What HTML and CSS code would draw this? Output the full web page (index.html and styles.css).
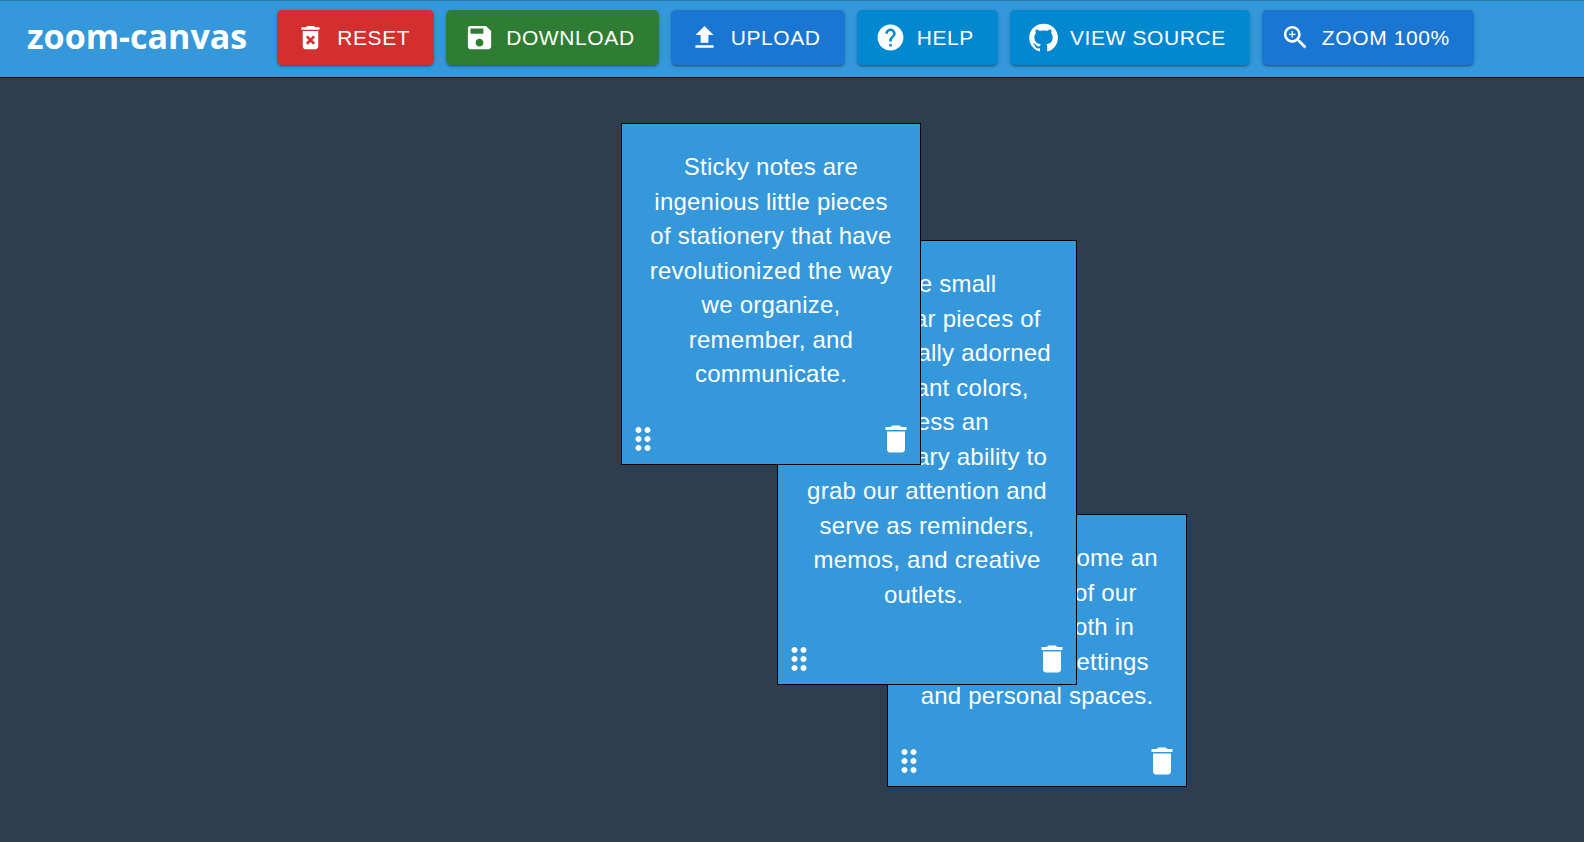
FILE: index.html
```html
<!DOCTYPE html>
<html lang="en">
<head>
<meta charset="utf-8">
<title>zoom-canvas</title>
<link rel="stylesheet" href="styles.css">
</head>
<body>
<header class="toolbar">
  <h1 class="brand">zoom-canvas</h1>
  <button class="btn btn-error" type="button">
    <svg class="btn-icon" viewBox="0 0 24 24" aria-hidden="true"><path d="M6 19c0 1.1.9 2 2 2h8c1.1 0 2-.9 2-2V7H6v12zm2.46-7.12 1.41-1.41L12 12.59l2.12-2.12 1.41 1.41L13.41 14l2.12 2.12-1.41 1.41L12 15.41l-2.12 2.12-1.41-1.41L10.59 14l-2.13-2.12zM15.5 4l-1-1h-5l-1 1H5v2h14V4z"/></svg>
    Reset
  </button>
  <button class="btn btn-success" type="button">
    <svg class="btn-icon" viewBox="0 0 24 24" aria-hidden="true"><path d="M17 3H5c-1.11 0-2 .9-2 2v14c0 1.1.89 2 2 2h14c1.1 0 2-.9 2-2V7l-4-4zm-5 16c-1.66 0-3-1.34-3-3s1.34-3 3-3 3 1.34 3 3-1.34 3-3 3zm3-10H5V5h10v4z"/></svg>
    Download
  </button>
  <button class="btn btn-primary" type="button">
    <svg class="btn-icon" viewBox="0 0 24 24" aria-hidden="true"><path d="M5 20h14v-2H5v2zm0-10h4v6h6v-6h4l-7-7-7 7z"/></svg>
    Upload
  </button>
  <button class="btn btn-info" type="button">
    <svg class="btn-icon" viewBox="0 0 24 24" aria-hidden="true"><path d="M12 2C6.48 2 2 6.48 2 12s4.48 10 10 10 10-4.48 10-10S17.52 2 12 2zm1 17h-2v-2h2v2zm2.07-7.75-.9.92C13.45 12.9 13 13.5 13 15h-2v-.5c0-1.1.45-2.1 1.17-2.83l1.24-1.26c.37-.36.59-.86.59-1.41 0-1.1-.9-2-2-2s-2 .9-2 2H8c0-2.21 1.79-4 4-4s4 1.79 4 4c0 .88-.36 1.68-.93 2.25z"/></svg>
    Help
  </button>
  <a class="btn btn-info" href="#source">
    <svg class="btn-icon" viewBox="0 0 24 24" aria-hidden="true"><path d="M12 1.27a11 11 0 00-3.48 21.46c.55.09.73-.28.73-.55v-1.84c-3.03.64-3.67-1.46-3.67-1.46-.55-1.29-1.28-1.65-1.28-1.65-.92-.65.1-.65.1-.65 1.1 0 1.73 1.1 1.73 1.1.92 1.65 2.57 1.2 3.21.92a2 2 0 01.64-1.47c-2.47-.27-5.04-1.19-5.04-5.5 0-1.1.46-2.1 1.2-2.84a3.76 3.76 0 010-2.93s.91-.28 3.11 1.1c1.8-.49 3.7-.49 5.5 0 2.1-1.38 3.02-1.1 3.02-1.1a3.76 3.76 0 01.1 2.93c.83.74 1.2 1.74 1.2 2.94 0 4.21-2.57 5.13-5.04 5.4.45.37.82.92.82 2.02v3.03c0 .27.1.64.73.55A11 11 0 0012 1.27"/></svg>
    View Source
  </a>
  <button class="btn btn-primary" type="button">
    <svg class="btn-icon" viewBox="0 0 24 24" aria-hidden="true"><path d="M15.5 14h-.79l-.28-.27C15.41 12.59 16 11.11 16 9.5 16 5.91 13.09 3 9.5 3S3 5.91 3 9.5 5.91 16 9.5 16c1.61 0 3.09-.59 4.23-1.57l.27.28v.79l5 4.99L20.49 19l-4.99-5zm-6 0C7.01 14 5 11.99 5 9.5S7.01 5 9.5 5 14 7.01 14 9.5 11.99 14 9.5 14zm2.5-4h-2v2H9v-2H7V9h2V7h1v2h2v1z"/></svg>
    Zoom 100%
  </button>
</header>

<main class="canvas">
  <article class="note note-third">
    <textarea class="note-text" rows="5" aria-label="Note 3" spellcheck="false">They have become an integral part of our daily lives, both in professional settings and personal spaces.</textarea>
    <div class="note-actions">
      <button class="icon-btn" type="button" aria-label="Move note"><svg class="note-icon" viewBox="0 0 24 24" aria-hidden="true"><path d="M11 18c0 1.1-.9 2-2 2s-2-.9-2-2 .9-2 2-2 2 .9 2 2zm-2-8c-1.1 0-2 .9-2 2s.9 2 2 2 2-.9 2-2-.9-2-2-2zm0-6c-1.1 0-2 .9-2 2s.9 2 2 2 2-.9 2-2-.9-2-2-2zm6 4c1.1 0 2-.9 2-2s-.9-2-2-2-2 .9-2 2 .9 2 2 2zm0 2c-1.1 0-2 .9-2 2s.9 2 2 2 2-.9 2-2-.9-2-2-2zm0 6c-1.1 0-2 .9-2 2s.9 2 2 2 2-.9 2-2-.9-2-2-2z"/></svg></button>
      <button class="icon-btn" type="button" aria-label="Delete note"><svg class="note-icon" viewBox="0 0 24 24" aria-hidden="true"><path d="M6 19c0 1.1.9 2 2 2h8c1.1 0 2-.9 2-2V7H6v12zM19 4h-3.5l-1-1h-5l-1 1H5v2h14V4z"/></svg></button>
    </div>
  </article>

  <article class="note note-second">
    <textarea class="note-text" rows="10" aria-label="Note 2" spellcheck="false"> These small rectangular pieces of paper, usually adorned with vibrant colors, possess an extraordinary ability to grab our attention and serve as reminders, memos, and creative outlets.&nbsp;</textarea>
    <div class="note-actions">
      <button class="icon-btn" type="button" aria-label="Move note"><svg class="note-icon" viewBox="0 0 24 24" aria-hidden="true"><path d="M11 18c0 1.1-.9 2-2 2s-2-.9-2-2 .9-2 2-2 2 .9 2 2zm-2-8c-1.1 0-2 .9-2 2s.9 2 2 2 2-.9 2-2-.9-2-2-2zm0-6c-1.1 0-2 .9-2 2s.9 2 2 2 2-.9 2-2-.9-2-2-2zm6 4c1.1 0 2-.9 2-2s-.9-2-2-2-2 .9-2 2 .9 2 2 2zm0 2c-1.1 0-2 .9-2 2s.9 2 2 2 2-.9 2-2-.9-2-2-2zm0 6c-1.1 0-2 .9-2 2s.9 2 2 2 2-.9 2-2-.9-2-2-2z"/></svg></button>
      <button class="icon-btn" type="button" aria-label="Delete note"><svg class="note-icon" viewBox="0 0 24 24" aria-hidden="true"><path d="M6 19c0 1.1.9 2 2 2h8c1.1 0 2-.9 2-2V7H6v12zM19 4h-3.5l-1-1h-5l-1 1H5v2h14V4z"/></svg></button>
    </div>
  </article>

  <article class="note note-first">
    <textarea class="note-text" rows="7" aria-label="Note 1" spellcheck="false">Sticky notes are ingenious little pieces of stationery that have revolutionized the way we organize, remember, and communicate.</textarea>
    <div class="note-actions">
      <button class="icon-btn" type="button" aria-label="Move note"><svg class="note-icon" viewBox="0 0 24 24" aria-hidden="true"><path d="M11 18c0 1.1-.9 2-2 2s-2-.9-2-2 .9-2 2-2 2 .9 2 2zm-2-8c-1.1 0-2 .9-2 2s.9 2 2 2 2-.9 2-2-.9-2-2-2zm0-6c-1.1 0-2 .9-2 2s.9 2 2 2 2-.9 2-2-.9-2-2-2zm6 4c1.1 0 2-.9 2-2s-.9-2-2-2-2 .9-2 2 .9 2 2 2zm0 2c-1.1 0-2 .9-2 2s.9 2 2 2 2-.9 2-2-.9-2-2-2zm0 6c-1.1 0-2 .9-2 2s.9 2 2 2 2-.9 2-2-.9-2-2-2z"/></svg></button>
      <button class="icon-btn" type="button" aria-label="Delete note"><svg class="note-icon" viewBox="0 0 24 24" aria-hidden="true"><path d="M6 19c0 1.1.9 2 2 2h8c1.1 0 2-.9 2-2V7H6v12zM19 4h-3.5l-1-1h-5l-1 1H5v2h14V4z"/></svg></button>
    </div>
  </article>
</main>
</body>
</html>
```

FILE: styles.css
```css
* {
  box-sizing: border-box;
}

body {
  margin: 0;
  min-height: 100vh;
  display: flex;
  flex-direction: column;
  background: #2c3e50;
  color: #fff;
  font-family: "Liberation Sans", Arial, sans-serif;
}

.toolbar {
  display: flex;
  align-items: center;
  gap: 12px;
  padding: 9px 26px 12px;
  background: #3498db;
  border-top: 1px solid #2a7ab0;
  border-bottom: 1px solid #000;
}

.brand {
  margin: 0 18px 0 0;
  padding: 0 0 4px 1px;
  font-family: "Segoe UI", "Open Sans", "Noto Sans", sans-serif;
  font-size: 34px;
  font-weight: 700;
  line-height: 48px;
}

.btn {
  display: inline-flex;
  align-items: center;
  gap: 11px;
  height: 55px;
  padding: 0 24px 0 18px;
  border: 0;
  border-radius: 5px;
  color: #fff;
  font: 400 21px/36px "Liberation Sans", Arial, sans-serif;
  letter-spacing: 0.02857em;
  text-transform: uppercase;
  text-decoration: none;
  white-space: nowrap;
  cursor: pointer;
  box-shadow: 0 3px 1px -2px rgba(0, 0, 0, 0.2), 0 2px 2px 0 rgba(0, 0, 0, 0.14), 0 1px 5px 0 rgba(0, 0, 0, 0.12);
}

.btn-error { background: #d32f2f; }
.btn-success { background: #2e7d32; }
.btn-primary { background: #1976d2; }
.btn-info { background: #0288d1; }

.btn-icon {
  width: 31px;
  height: 31px;
  fill: currentColor;
}

.canvas {
  position: relative;
  flex: 1;
  overflow: hidden;
}

.note {
  position: absolute;
  width: 300px;
  padding: 26px 6px 7px 3px;
  background: #3498db;
  border: 1px solid #000;
}

.note-first { left: 621px; top: 45px; }
.note-second { left: 777px; top: 162px; }
.note-third { left: 887px; top: 436px; }

.note-text {
  display: block;
  width: 250px;
  margin: 0 auto 29px 21px;
  padding: 0;
  border: 0;
  outline: 0;
  overflow: hidden;
  resize: none;
  background: transparent;
  color: inherit;
  font: 400 24px/1.4375 "Liberation Sans", Arial, sans-serif;
  letter-spacing: 0.00938em;
  text-align: center;
}

.note-actions {
  display: flex;
  justify-content: space-between;
}

.icon-btn {
  display: flex;
  padding: 0;
  border: 0;
  background: none;
  color: #fff;
  cursor: pointer;
}

.note-icon {
  width: 36px;
  height: 36px;
  fill: currentColor;
}
```
